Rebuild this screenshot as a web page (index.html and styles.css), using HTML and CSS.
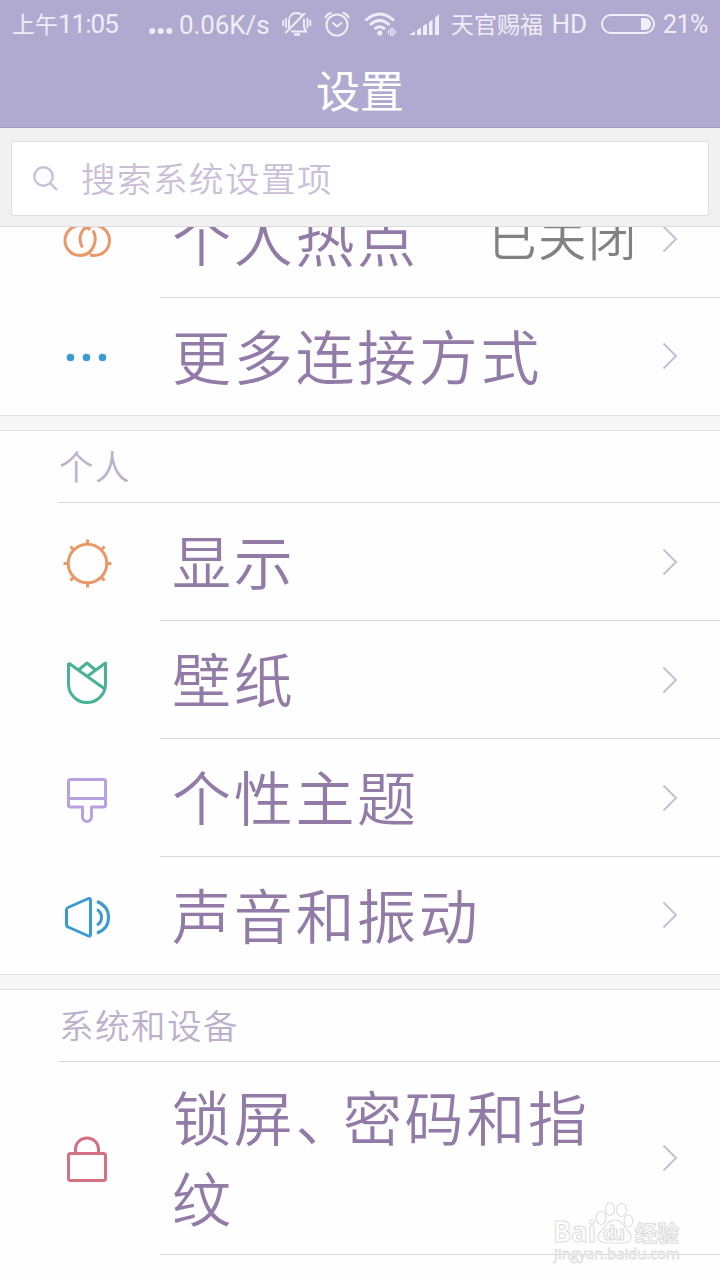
FILE: index.html
```html
<!DOCTYPE html>
<html lang="zh-CN">
<head>
    <meta charset="UTF-8">
    <meta name="viewport" content="width=device-width, initial-scale=1.0">
    <title>设置</title>
    <link rel="stylesheet" href="styles.css">
</head>
<body>
    <header>
        <div class="status-bar">
            <span class="time"><span class="cn">上午</span>11:05</span>
            <svg class="dots" width="24" height="8" viewBox="0 0 24 8" fill="currentColor"><circle cx="3.2" cy="4" r="3"/><circle cx="11.8" cy="4" r="3"/><circle cx="20.4" cy="4" r="3"/></svg>
            <span class="speed">0.06K/s</span>
            <!-- Muted bell -->
            <svg class="mute" width="30" height="26" viewBox="0 0 30 26" fill="none" stroke="currentColor" stroke-width="2">
                <path d="M7 17V10C7 5 10 2 14.500 2C17 2 19 3 20 4M22 8V16L24 20.500H9"/>
                <path d="M3.500 22L23 2"/>
                <path d="M12 23.500H18" stroke-width="2.500"/>
                <path d="M1.200 9V15M4 7V17M25.500 7V17M28.300 9V15" stroke-width="1.800"/>
            </svg>
            <!-- Alarm -->
            <svg class="alarm" width="26" height="26" viewBox="0 0 26 26" fill="none" stroke="currentColor" stroke-width="2">
                <circle cx="13" cy="14" r="10.500"/>
                <path d="M8.500 11.500L13 15.500L18 11.500M1 7Q3 3 7.500 1.500M25 7Q23 3 18.500 1.500"/>
            </svg>
            <!-- Wifi -->
            <svg class="wifi" width="33" height="24" viewBox="0 0 33 24" fill="none" stroke="currentColor" stroke-width="3">
                <path d="M1.500 8.500Q15.500 -4.500 30 8.500M6 13Q15.500 4 25.500 13M10.500 17Q15.500 12.500 21 17"/>
                <circle cx="15.700" cy="21" r="2.500" fill="currentColor" stroke="none"/>
                <path d="M24.500 18V22M26.800 16V24M29 16V24M31.300 18V22" stroke-width="1.300"/>
            </svg>
            <!-- Signal -->
            <svg class="signal" width="30" height="21" viewBox="0 0 30 21" fill="currentColor"><path d="M0 21L6 17V21ZM8 16L12 13.500V21H8ZM14 12L18 9.500V21H14ZM20 8L23.500 5.500V21H20ZM26 4L30 0V21H26Z"/></svg>
            <span class="carrier"><span class="cn">天官赐福</span> HD</span>
            <svg class="battery" width="54" height="20" viewBox="0 0 54 20"><rect x="1" y="1" width="52" height="18" rx="9" fill="none" stroke="currentColor" stroke-width="2"/><path d="M40 4H44A6 6 0 0 1 44 16H40Z" fill="currentColor"/></svg>
            <span class="percent">21%</span>
        </div>
        <h1>设置</h1>
    </header>

    <div class="search">
        <div class="search-box">
            <svg width="26" height="26" viewBox="0 0 26 26" fill="none" stroke="currentColor" stroke-width="2.400"><circle cx="10.500" cy="10.500" r="9.200"/><path d="M17 17L24 24"/></svg>
            <span>搜索系统设置项</span>
        </div>
    </div>

    <main>
        <section>
            <div class="row first">
                <svg class="icon orange" viewBox="0 0 50 50"><path d="M31 15.500C36 24 32 40.500 18 40.500A15 15 0 1 1 18 10.500C22 10.500 26 12.500 28 15M20.500 32.500C15.500 24 18 10.500 32.500 10.500A15 15 0 1 1 32.500 40.500Q30 40.500 28 40"/></svg>
                <span class="name">个人热点</span>
                <span class="value">已关闭</span>
                <svg class="arrow" viewBox="0 0 16 28"><path d="M1.500 1.500L14 14L1.500 26.500"/></svg>
            </div>
            <div class="row">
                <svg class="icon blue solid" viewBox="0 0 50 50"><circle cx="8.500" cy="24.500" r="3.800"/><circle cx="24.500" cy="24.500" r="3.800"/><circle cx="40.500" cy="24.500" r="3.800"/></svg>
                <span class="name">更多连接方式</span>
                <svg class="arrow" viewBox="0 0 16 28"><path d="M1.500 1.500L14 14L1.500 26.500"/></svg>
            </div>
        </section>

        <section>
            <h2>个人</h2>
            <div class="row">
                <svg class="icon orange" viewBox="0 0 50 50"><circle cx="25.500" cy="25.500" r="19.300"/><path d="M25.500 1.500V6M25.500 45V49.500M1.500 25.500H6M45 25.500H49.500M8.500 8.500L12 12M39 39L42.500 42.500M42.500 8.500L39 12M12 39L8.500 42.500"/></svg>
                <span class="name">显示</span>
                <svg class="arrow" viewBox="0 0 16 28"><path d="M1.500 1.500L14 14L1.500 26.500"/></svg>
            </div>
            <div class="row">
                <svg class="icon green" viewBox="0 0 50 50"><path d="M6.500 7V28A18.500 18.500 0 0 0 43.500 28V7L25 20.500M6.500 7L43.500 33.500M16.500 14L25 7L33.500 14"/></svg>
                <span class="name">壁纸</span>
                <svg class="arrow" viewBox="0 0 16 28"><path d="M1.500 1.500L14 14L1.500 26.500"/></svg>
            </div>
            <div class="row">
                <svg class="icon violet" viewBox="0 0 50 50"><path d="M8.500 5.500H41.500Q43.500 5.500 43.500 7.500V31Q43.500 33 41.500 33H29.500V43A4.500 4.500 0 0 1 20.500 43V33H8.500Q6.500 33 6.500 31V7.500Q6.500 5.500 8.500 5.500ZM6.500 24.500H43.500"/></svg>
                <span class="name">个性主题</span>
                <svg class="arrow" viewBox="0 0 16 28"><path d="M1.500 1.500L14 14L1.500 26.500"/></svg>
            </div>
            <div class="row">
                <svg class="icon blue" viewBox="0 0 50 50"><path d="M26.500 6.500L6 15.500Q4.500 16.500 4.500 18V33Q4.500 34.500 6 35L26.500 44Q28.500 44.500 28.500 42.500V8Q28.500 6 26.500 6.500ZM35 9.500Q46.500 14 46.500 25.500Q46.500 37 35 41M35 17.500Q39.500 20 39.500 25.500Q39.500 30.500 35 33"/></svg>
                <span class="name">声音和振动</span>
                <svg class="arrow" viewBox="0 0 16 28"><path d="M1.500 1.500L14 14L1.500 26.500"/></svg>
            </div>
        </section>

        <section>
            <h2>系统和设备</h2>
            <div class="row tall">
                <svg class="icon red" viewBox="0 0 50 50"><rect x="6.500" y="18.500" width="37" height="27" rx="2"/><path d="M13.500 18.500V14A11.500 11 0 0 1 36.500 14V18.500"/></svg>
                <span class="name">锁屏<span class="comma">、</span>密码和指纹</span>
                <svg class="arrow" viewBox="0 0 16 28"><path d="M1.500 1.500L14 14L1.500 26.500"/></svg>
            </div>
        </section>
    </main>

    <!-- Watermark over the list -->
    <svg class="watermark" width="140" height="66" viewBox="0 0 140 66">
        <text x="2" y="42" font-size="29" font-weight="bold" textLength="43" lengthAdjust="spacingAndGlyphs">Bai</text>
        <ellipse cx="50" cy="18" rx="5" ry="6.500"/><ellipse cx="59" cy="9" rx="4.500" ry="6.500"/><ellipse cx="70.500" cy="10" rx="5" ry="6.500"/><ellipse cx="77.500" cy="21" rx="4.500" ry="6"/>
        <path d="M64 20C56 20 55 27 50 31C44 37 48 43 56 43H72C81 43 82 36 77 31C72 27 72 20 64 20Z"/>
        <text x="52" y="40" font-size="19" font-weight="bold" textLength="22">du</text>
        <text x="84" y="41" font-size="22" font-weight="bold" textLength="44">经验</text>
        <text class="url" x="3" y="59" font-size="15" textLength="126">jingyan.baidu.com</text>
    </svg>
</body>
</html>
```
FILE: styles.css
```css
* {
    box-sizing: border-box;
}

body {
    margin: 0;
    height: 1280px;
    display: flex;
    flex-direction: column;
    overflow: hidden;
    position: relative;
    background: #fefefe;
    font-family: "Noto Sans CJK SC", sans-serif;
}

header {
    height: 128px;
    flex: none;
    background: #b0aad0;
    border-bottom: 1px solid #9f99c2;
    color: #fff;
}

.status-bar {
    height: 50px;
    display: flex;
    align-items: center;
    padding-left: 12px;
    color: #efedf7;
    font-family: Roboto, "Noto Sans CJK SC", sans-serif;
    font-size: 26px;
    line-height: 54px;
    white-space: nowrap;
}

.status-bar svg {
    flex: none;
    margin-top: -2px;
}

.time {
    width: 137px;
    letter-spacing: -1px;
}

.cn {
    font-size: 23px;
    letter-spacing: 0;
}

.status-bar .dots {
    margin: 12px 6px 0 0;
}

.speed {
    width: 103px;
    letter-spacing: -0.1px;
}

.mute {
    margin-right: 12px;
}

.alarm {
    margin-right: 14px;
}

.wifi {
    margin-right: 12px;
}

.signal {
    margin-right: 12px;
}

.carrier {
    width: 150px;
    font-size: 26px;
    word-spacing: 2px;
}

.battery {
    margin-right: 8px;
}

.percent {
    font-size: 25px;
    letter-spacing: -0.5px;
    line-height: 50px;
}

h1 {
    margin: 0;
    font-size: 44px;
    font-weight: 400;
    line-height: 78px;
    text-align: center;
}

.search {
    height: 99px;
    flex: none;
    padding: 13px 11px 10px;
    background: #f1f1f1;
    border-bottom: 1px solid #dcdcdc;
}

.search-box {
    height: 75px;
    display: flex;
    align-items: center;
    gap: 22px;
    padding: 0 0 3px 21px;
    background: #fff;
    border: 1px solid #e0e0e0;
    border-radius: 3px;
    color: #cbbfd8;
    font-size: 34.5px;
    font-weight: 350;
    letter-spacing: 1.5px;
}

.search-box svg {
    margin-top: 4px;
}

main {
    flex: 1;
    min-height: 0;
    overflow: hidden;
}

section {
    border-bottom: 1px solid #e0e0e0;
}

section + section {
    margin-top: 14px;
    border-top: 1px solid #e0e0e0;
    box-shadow: 0 -14px #f7f7f7;
}

section:last-child {
    border-bottom: none;
}

h2 {
    height: 72px;
    margin: 0 0 0 58px;
    padding-left: 1px;
    border-bottom: 1px solid #d8d8d8;
    color: #bdb0cb;
    font-size: 34.5px;
    font-weight: 350;
    letter-spacing: 1.5px;
    line-height: 69px;
}

.row {
    height: 118px;
    display: flex;
    align-items: center;
    padding: 0 42px 0 62px;
    /* divider starts after the icon column */
    background: linear-gradient(#d8d8d8, #d8d8d8) 160px bottom / 560px 1px no-repeat;
}

.row:last-child:not(.tall) {
    height: 117px;
    background: none;
}

/* scrolled partly under the search bar */
.first {
    margin-top: -47px;
}

.tall {
    height: 193px;
}

.icon {
    width: 50px;
    height: 50px;
    flex: none;
    margin: 2px 60px 0 0;
    fill: none;
    stroke: currentColor;
    stroke-width: 3;
    stroke-linejoin: round;
}

.solid {
    fill: currentColor;
    stroke: none;
}

.orange {
    color: #eb9868;
}

.blue {
    color: #3b9bd0;
}

.green {
    color: #48b394;
}

.violet {
    color: #b9a0df;
}

.red {
    color: #d57083;
}

.name {
    flex: 1;
    padding-bottom: 5px;
    color: #927ca7;
    font-size: 59px;
    font-weight: 350;
    letter-spacing: 2.7px;
    line-height: 81px;
    white-space: nowrap;
}

.tall .name {
    padding: 0 40px 5px 0;
    white-space: normal;
}

.comma {
    letter-spacing: -11.5px;
}

.value {
    margin-right: 24px;
    padding-bottom: 9px;
    color: #828282;
    font-size: 48.5px;
    font-weight: 350;
    letter-spacing: 1.5px;
}

.arrow {
    width: 16px;
    height: 28px;
    flex: none;
    margin-top: -1px;
    fill: none;
    stroke: #c8bfd6;
    stroke-width: 2;
}

.watermark {
    position: absolute;
    left: 551px;
    top: 1200px;
    fill: #fff;
    stroke: #dedede;
    stroke-width: 1.2;
    font-family: "Open Sans", "Noto Sans CJK SC", sans-serif;
}

.url {
    stroke-width: 0.8;
}
```
